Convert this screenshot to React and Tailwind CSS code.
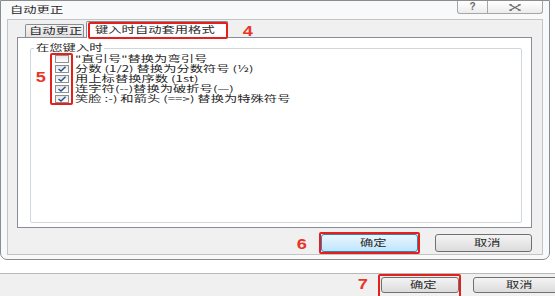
import React from "react";

function T({ children, className = "" }) {
  return (
    <span className={"inline-block whitespace-nowrap origin-left scale-x-[1.33] scale-y-[0.86] " + className}>
      {children}
    </span>
  );
}

function Check({ checked }) {
  return (
    <div className="w-[14px] h-[8px] shrink-0 border border-[#8e8f8f] bg-gradient-to-b from-[#e6e6e6] to-[#ffffff] flex items-center justify-center">
      {checked && (
        <svg width="10" height="6" viewBox="0 0 10 6">
          <path d="M1.5 3 L4 5 L8.5 0.8" fill="none" stroke="#2b4e8c" strokeWidth="1.4" />
        </svg>
      )}
    </div>
  );
}

function Num({ children, className = "" }) {
  return (
    <span className={"absolute font-['Liberation_Sans',sans-serif] font-bold text-[14px] leading-[14px] text-[#e8352a] inline-block scale-x-[1.3] " + className}>
      {children}
    </span>
  );
}

export default function App() {
  const rows = [
    [false, "\"直引号\"替换为弯引号"],
    [true, "分数 (1/2) 替换为分数符号 (½)"],
    [true, "用上标替换序数 (1st)"],
    [true, "连字符(--)替换为破折号(—)"],
    [true, "笑脸 :-) 和箭头 (==>) 替换为特殊符号"],
  ];
  return (
    <div className="w-[555px] h-[296px] overflow-hidden bg-white flex flex-col font-['Noto_Sans_CJK_SC','Noto_Sans',sans-serif] text-[10px] leading-[10px] text-[#262626]">
      {/* dialog */}
      <div className="h-[260px] w-[550px] shrink-0 border border-[#8b8c8d] rounded-b-[7px] bg-[#f8f9fa] flex flex-col px-[6px] pb-[4px]">
        {/* title bar */}
        <div className="h-[18px] shrink-0 flex items-start">
          <T className="mt-[4px] ml-[3px] text-[#2a2a2a]">自动更正</T>
          <div className="ml-auto flex">
            <div className="w-[31px] h-[13px] border border-t-0 border-[#a6a6a6] rounded-bl-[3px] bg-gradient-to-b from-[#ffffff] to-[#ececec] flex items-center justify-center">
              <span className="font-['Liberation_Sans',sans-serif] font-bold text-[10px] leading-[10px] text-[#6a6a6a]">?</span>
            </div>
            <div className="w-[55px] h-[13px] border border-l-0 border-t-0 border-[#a6a6a6] rounded-br-[3px] bg-gradient-to-b from-[#ffffff] to-[#ececec] flex items-center justify-center">
              <svg width="14" height="7" viewBox="0 0 14 7">
                <path d="M2 0.8 L12 6.2 M12 0.8 L2 6.2" stroke="#6b6b6b" strokeWidth="1.3" />
                <path d="M1 0.8 H4 M10 0.8 H13 M1 6.2 H4 M10 6.2 H13" stroke="#6b6b6b" strokeWidth="1" />
              </svg>
            </div>
          </div>
        </div>
        {/* client */}
        <div className="flex-1 bg-[#f0f0f0] border border-[#c4c4c4] flex flex-col pl-[9px] pr-[10px] pt-[1px]">
          {/* tabs */}
          <div className="h-[17px] shrink-0 flex items-end pl-[8px] relative z-10">
            <div className="w-[59px] h-[13px] mb-[1px] border border-b-0 border-[#898c95] rounded-t-[2px] bg-gradient-to-b from-[#f4f4f4] to-[#e2e2e2] flex items-center pl-[3px]">
              <T>自动更正</T>
            </div>
            <div className="relative ml-[2px] w-[142px] h-[17px] border border-b-0 border-[#898c95] rounded-t-[2px] bg-white flex items-center pl-[8px] pb-[1px]">
              <T>键入时自动套用格式</T>
              <div className="absolute left-[1px] right-[-1px] top-0 bottom-[-1px] border-2 border-[#e5201c] rounded-[2px]" />
              <Num className="left-[157px] top-[2px]">4</Num>
            </div>
          </div>
          {/* panel */}
          <div className="h-[191px] shrink-0 -mt-px border border-[#898c95] bg-white flex flex-col pl-[12px] pr-[9px] pt-[5px] pb-[4px]">
            <fieldset className="flex-1 border border-[#d0d7dc] rounded-[2px] pl-[3px] m-0 min-w-0">
              <legend className="w-[70px] px-[2px]">
                <T>在您键入时</T>
              </legend>
              <div className="relative ml-[21px] mt-[1px] flex flex-col">
                {rows.map(([c, t], i) => (
                  <div key={i} className="h-[10px] flex items-center">
                    <Check checked={c} />
                    <T className="ml-[6px]">{t}</T>
                  </div>
                ))}
                <div className="absolute left-[-5px] top-[-1px] w-[23px] h-[52px] border-2 border-[#e5201c] rounded-[2px]" />
                <Num className="left-[-18px] top-[16px]">5</Num>
              </div>
            </fieldset>
          </div>
          {/* buttons */}
          <div className="mt-[6px] flex justify-end gap-[17px]">
            <div className="relative">
              <div className="w-[97px] h-[18px] border border-[#3c7fb1] rounded-[3px] bg-gradient-to-b from-[#eaf6fd] to-[#bee6fd] flex items-center justify-center">
                <T className="origin-center">确定</T>
              </div>
              <div className="absolute -left-[2px] -right-[2px] -top-[2px] -bottom-[2px] border-2 border-[#e5201c] rounded-[2px]" />
              <Num className="left-[-23px] top-[3px]">6</Num>
            </div>
            <div className="w-[97px] h-[18px] border border-[#707070] rounded-[3px] bg-gradient-to-b from-[#f4f4f4] to-[#dcdcdc] flex items-center justify-center">
              <T className="origin-center">取消</T>
            </div>
          </div>
        </div>
      </div>
      <div className="h-[13px] shrink-0" />
      {/* bottom bar */}
      <div className="flex-1 border-t border-[#b8b8b8] bg-[#f0f0f0] flex pl-[381px] pt-[3px] gap-[14px]">
        <div className="relative">
          <div className="w-[78px] h-[16px] border border-[#707070] rounded-[3px] bg-gradient-to-b from-[#f4f4f4] to-[#dcdcdc] flex items-center justify-center">
            <T className="origin-center">确定</T>
          </div>
          <div className="absolute -left-[3px] -right-[2px] -top-[3px] -bottom-[2px] border-2 border-[#e5201c] rounded-[2px]" />
          <Num className="left-[-22px] top-[0px]">7</Num>
        </div>
        <div className="w-[85px] h-[16px] shrink-0 border border-[#707070] rounded-[3px] bg-gradient-to-b from-[#f4f4f4] to-[#dcdcdc] flex items-center justify-center">
          <T className="origin-center">取消</T>
        </div>
      </div>
    </div>
  );
}
